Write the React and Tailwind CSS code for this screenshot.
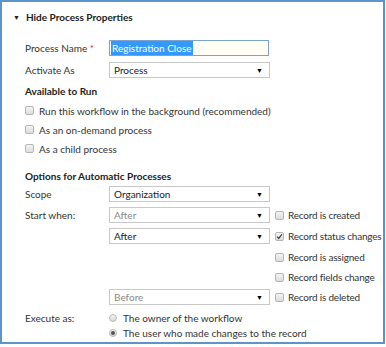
import React from 'react';

const font = { fontFamily: 'Lato, "Liberation Sans", sans-serif' };

const Box = ({ checked }) => (
  <span className="inline-flex h-[9px] w-[9px] shrink-0 items-center justify-center rounded-[2px] border border-[#b5b5b5] bg-gradient-to-b from-[#f4f4f4] to-[#dcdcdc]">
    {checked && (
      <svg width="9" height="9" viewBox="0 0 9 9">
        <path d="M1.5 4.8 L3.6 7 L7.6 1.6" fill="none" stroke="#333" strokeWidth="1.5" />
      </svg>
    )}
  </span>
);

const Radio = ({ checked }) => (
  <span className="inline-flex h-[8px] w-[8px] shrink-0 items-center justify-center rounded-full border border-[#b8b8b8] bg-gradient-to-b from-[#f4f4f4] to-[#dadada]">
    {checked && <span className="h-[4px] w-[4px] rounded-full bg-[#555]" />}
  </span>
);

const Select = ({ value, muted }) => (
  <div className="flex h-[16px] w-[161px] shrink-0 items-center justify-between border border-[#c8c8c8] bg-white pl-[4px] pr-[6px]">
    <span className={muted ? 'text-[#8a8a8a]' : 'text-[#222]'}>{value}</span>
    <span className="text-[7px] text-black">▼</span>
  </div>
);

const Row = ({ label, h, children }) => (
  <div className={`flex items-center ${h}`}>
    <div className="w-[84px] shrink-0 text-[#333]">{label}</div>
    {children}
  </div>
);

const Trigger = ({ checked, label }) => (
  <div className="ml-[5px] flex items-center gap-[4px] whitespace-nowrap text-[#333]">
    <Box checked={checked} />
    <span className="tracking-[-0.2px]">{label}</span>
  </div>
);

const Check = ({ label }) => (
  <div className="flex h-[19px] items-center gap-[5px] text-[#333]">
    <Box />
    {label}
  </div>
);

export default function App() {
  return (
    <div style={font} className="h-[347px] w-[386px] bg-white text-[10px] leading-none">
      <div className="h-[344px] w-[385px] border-2 border-[#5b95cc] bg-white">
        <div className="flex h-[30px] items-center pl-[11px] font-bold text-[#222]">
          <span className="mr-[6px] text-[7px]">▼</span>
          Hide Process Properties
        </div>
        <div className="pl-[23px]">
          <div className="mt-[5px] flex h-[22px] items-center">
            <div className="w-[84px] shrink-0 text-[#333]">
              Process Name <span className="text-[#e0282e]">*</span>
            </div>
            <div className="flex h-[16px] w-[160px] items-center border border-[#7da2ce] bg-[#fffef4] pl-[1px]">
              <span className="bg-[#3399ff] px-[1px] py-[2px] text-white">Registration Close</span>
            </div>
          </div>
          <Row label="Activate As" h="h-[22px]">
            <Select value="Process" />
          </Row>
          <div className="flex h-[20px] items-center font-bold text-[#222]">Available to Run</div>
          <Check label="Run this workflow in the background (recommended)" />
          <Check label="As an on-demand process" />
          <Check label="As a child process" />
          <div className="flex h-[26px] items-end pb-[3px] font-bold text-[#222]">Options for Automatic Processes</div>
          <Row label="Scope" h="h-[20px]">
            <Select value="Organization" />
          </Row>
          <Row label="Start when:" h="h-[22px]">
            <Select value="After" muted />
            <Trigger label="Record is created" />
          </Row>
          <Row label="" h="h-[20px]">
            <Select value="After" />
            <Trigger checked label="Record status changes" />
          </Row>
          <Row label="" h="h-[22px]">
            <div className="w-[161px] shrink-0" />
            <Trigger label="Record is assigned" />
          </Row>
          <Row label="" h="h-[18px]">
            <div className="w-[161px] shrink-0" />
            <Trigger label="Record fields change" />
          </Row>
          <Row label="" h="h-[22px]">
            <Select value="Before" muted />
            <Trigger label="Record is deleted" />
          </Row>
          <Row label="Execute as:" h="h-[20px]">
            <div className="flex items-center gap-[6px] text-[#333]">
              <Radio />
              The owner of the workflow
            </div>
          </Row>
          <Row label="" h="h-[10px]">
            <div className="flex items-center gap-[6px] text-[#333]">
              <Radio checked />
              The user who made changes to the record
            </div>
          </Row>
        </div>
      </div>
    </div>
  );
}
